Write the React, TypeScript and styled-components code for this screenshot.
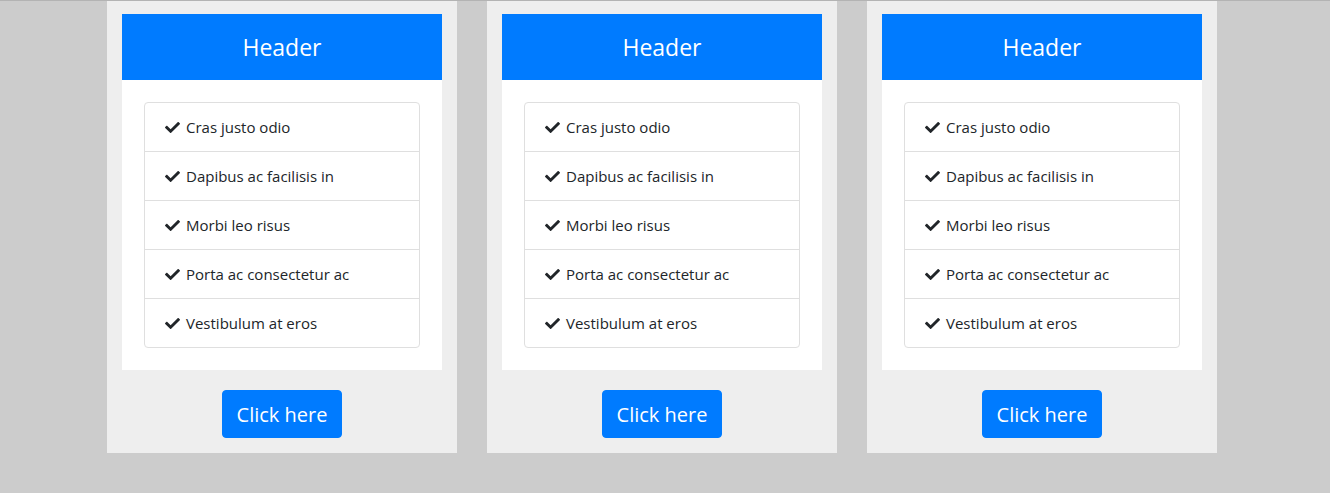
import { createGlobalStyle } from 'styled-components'
import styled from 'styled-components'
import { FaCheck } from 'react-icons/fa'

const GlobalStyle = createGlobalStyle`
  html, body {
    margin: 0;
    padding: 0;
    background-color: #cccccc;
    font-family: "Open Sans", "Noto Sans", sans-serif;
    color: #212529;
  }
`

const Page = styled.main`
  min-height: 493px;
  box-sizing: border-box;
  border-top: 1px solid #b3b3b3;
  display: flex;
  gap: 30px;
  padding-left: 107px;
  align-items: flex-start;
`

const Column = styled.section`
  width: 350px;
  background-color: #eeeeee;
  padding: 13px 15px 15px;
  box-sizing: border-box;
  display: flex;
  flex-direction: column;
  align-items: center;
`

const Card = styled.div`
  width: 320px;
  background-color: #fff;
  display: flex;
  flex-direction: column;
`

const Header = styled.h3`
  margin: 0;
  height: 66px;
  display: flex;
  align-items: center;
  justify-content: center;
  background-color: #007bff;
  color: #fff;
  font-size: 23px;
  font-weight: 400;
`

const Body = styled.div`
  padding: 22px;
`

const List = styled.ul`
  list-style: none;
  margin: 0;
  padding: 0;
  border: 1px solid #dfdfdf;
  border-radius: 4px;
`

const Item = styled.li`
  display: flex;
  align-items: center;
  gap: 6px;
  height: 48px;
  padding: 0 20px;
  font-size: 15px;
  & + & {
    border-top: 1px solid #dfdfdf;
  }
  svg {
    width: 15px;
    height: 15px;
    color: #212529;
  }
`

const Button = styled.button`
  margin-top: 20px;
  width: 120px;
  height: 48px;
  border: 1px solid #007bff;
  border-radius: 4px;
  background-color: #007bff;
  color: #fff;
  font-family: inherit;
  font-size: 20px;
  cursor: pointer;
`

const items = [
  'Cras justo odio',
  'Dapibus ac facilisis in',
  'Morbi leo risus',
  'Porta ac consectetur ac',
  'Vestibulum at eros',
]

export default function App() {
  return (
    <>
      <GlobalStyle />
      <Page>
        {[0, 1, 2].map((n) => (
          <Column key={n}>
            <Card>
              <Header>Header</Header>
              <Body>
                <List>
                  {items.map((text) => (
                    <Item key={text}>
                      <FaCheck />
                      {text}
                    </Item>
                  ))}
                </List>
              </Body>
            </Card>
            <Button type='button'>Click here</Button>
          </Column>
        ))}
      </Page>
    </>
  )
}
